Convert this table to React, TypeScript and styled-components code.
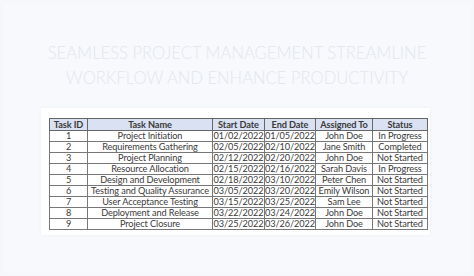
import styled, { createGlobalStyle } from "styled-components";

const GlobalStyle = createGlobalStyle`
  html, body {
    margin: 0;
    padding: 0;
    background: #f6f7fb;
  }
`;

// 전체 화면
const Page = styled.div`
  width: 474px;
  height: 276px;
  box-sizing: border-box;
  padding: 3px;
  background: #f6f7fb;
`;

const Frame = styled.div`
  height: 100%;
  box-sizing: border-box;
  background: #f8f9fc;
  display: flex;
  flex-direction: column;
  align-items: center;
  padding-top: 38px;
`;

// 흐릿한 제목
const Title = styled.h1`
  margin: 0;
  text-align: center;
  white-space: nowrap;
  font-family: Lato, "Noto Sans", sans-serif;
  font-weight: 300;
  font-size: 16.6px;
  line-height: 25px;
  color: #e3e6ee;
`;

const Card = styled.div`
  margin-top: 17px;
  margin-left: -3px;
  width: 389px;
  height: 127px;
  box-sizing: border-box;
  padding: 10px 8px 0 8px;
  background: #fff;
  box-shadow: 0 0 3px rgba(18, 22, 40, 0.05);
`;

const Table = styled.table`
  border-collapse: collapse;
  table-layout: fixed;
  width: 372px;
  font-family: Lato, "Liberation Sans", sans-serif;
  font-size: 9.2px;
  letter-spacing: -0.1px;
  color: #3a3a3a;
`;

const HeadCell = styled.th<{ $w: number }>`
  width: ${(p) => p.$w}px;
  height: 11px;
  padding: 0;
  background: #d9e1f2;
  border: 1px solid #666;
  font-weight: 700;
  line-height: 10px;
  text-align: center;
  white-space: nowrap;
`;

const Cell = styled.td`
  height: 10px;
  padding: 0;
  border: 1px solid #777;
  line-height: 10px;
  text-align: center;
  white-space: nowrap;
`;

const columns = [
  { label: "Task ID", w: 37 },
  { label: "Task Name", w: 124 },
  { label: "Start Date", w: 51 },
  { label: "End Date", w: 50 },
  { label: "Assigned To", w: 56 },
  { label: "Status", w: 54 },
];

const rows = [
  ["1", "Project Initiation", "01/02/2022", "01/05/2022", "John Doe", "In Progress"],
  ["2", "Requirements Gathering", "02/05/2022", "02/10/2022", "Jane Smith", "Completed"],
  ["3", "Project Planning", "02/12/2022", "02/20/2022", "John Doe", "Not Started"],
  ["4", "Resource Allocation", "02/15/2022", "02/16/2022", "Sarah Davis", "In Progress"],
  ["5", "Design and Development", "02/18/2022", "03/10/2022", "Peter Chen", "Not Started"],
  ["6", "Testing and Quality Assurance", "03/05/2022", "03/20/2022", "Emily Wilson", "Not Started"],
  ["7", "User Acceptance Testing", "03/15/2022", "03/25/2022", "Sam Lee", "Not Started"],
  ["8", "Deployment and Release", "03/22/2022", "03/24/2022", "John Doe", "Not Started"],
  ["9", "Project Closure", "03/25/2022", "03/26/2022", "John Doe", "Not Started"],
];

export default function App() {
  return (
    <Page>
      <GlobalStyle />
      <Frame>
        <Title>
          SEAMLESS PROJECT MANAGEMENT STREAMLINE
          <br />
          WORKFLOW AND ENHANCE PRODUCTIVITY
        </Title>
        <Card>
          <Table>
            <thead>
              <tr>
                {columns.map((c) => (
                  <HeadCell key={c.label} $w={c.w}>
                    {c.label}
                  </HeadCell>
                ))}
              </tr>
            </thead>
            <tbody>
              {rows.map((r) => (
                <tr key={r[0]}>
                  {r.map((v, i) => (
                    <Cell key={i}>{v}</Cell>
                  ))}
                </tr>
              ))}
            </tbody>
          </Table>
        </Card>
      </Frame>
    </Page>
  );
}
